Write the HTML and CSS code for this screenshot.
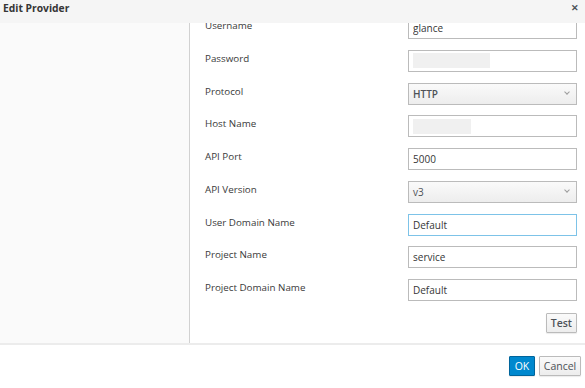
FILE: index.html
```html
<!DOCTYPE html>
<html lang="en">
<head>
    <meta charset="UTF-8">
    <meta name="viewport" content="width=device-width, initial-scale=1.0">
    <title>Edit Provider</title>
    <link rel="stylesheet" href="styles.css">
</head>
<body>
    <div class="modal">
        <div class="modal-header">
            <h4>Edit Provider</h4>
            <span class="close">&#x2715;</span>
        </div>
        <div class="modal-body">
            <div class="sidebar"></div>
            <div class="content">
                <form class="form">
                    <div class="row">
                        <label>Username</label>
                        <input type="text" class="field" value="glance">
                    </div>
                    <div class="row">
                        <label>Password</label>
                        <div class="field"><span class="blur blur-long"></span></div>
                    </div>
                    <div class="row">
                        <label>Protocol</label>
                        <div class="field select"><span>HTTP</span><span class="caret"></span></div>
                    </div>
                    <div class="row">
                        <label>Host Name</label>
                        <div class="field"><span class="blur blur-short"></span></div>
                    </div>
                    <div class="row">
                        <label>API Port</label>
                        <input type="text" class="field" value="5000">
                    </div>
                    <div class="row">
                        <label>API Version</label>
                        <div class="field select light"><span>v3</span><span class="caret"></span></div>
                    </div>
                    <div class="row">
                        <label>User Domain Name</label>
                        <input type="text" class="field focus" value="Default">
                    </div>
                    <div class="row">
                        <label>Project Name</label>
                        <input type="text" class="field" value="service">
                    </div>
                    <div class="row">
                        <label>Project Domain Name</label>
                        <input type="text" class="field" value="Default">
                    </div>
                    <div class="test-row">
                        <button type="button" class="btn btn-test">Test</button>
                    </div>
                </form>
            </div>
        </div>
        <div class="modal-footer">
            <button type="button" class="btn btn-primary">OK</button>
            <button type="button" class="btn btn-cancel">Cancel</button>
        </div>
    </div>
</body>
</html>
```

FILE: styles.css
```css
body {
    margin: 0;
    padding: 0;
    font-family: "Open Sans", "Liberation Sans", sans-serif;
    font-size: 10px;
    color: #363636;
    background-color: #fff;
}

.modal {
    width: 585px;
    height: 388px;
    display: flex;
    flex-direction: column;
    overflow: hidden;
}

.modal-header {
    height: 23px;
    background-color: #f5f5f5;
    display: flex;
    align-items: center;
    justify-content: space-between;
    padding: 0 6px 0 3px;
    position: relative;
    z-index: 1;
}

.modal-header h4 {
    margin: 0;
    font-size: 10.3px;
    font-weight: 700;
    color: #363636;
    margin-top: -7px;
}

.close {
    font-size: 9px;
    font-weight: 700;
    color: #4d5258;
    margin-top: -9px;
}

.modal-body {
    height: 320px;
    display: flex;
}

.sidebar {
    width: 189px;
    background-color: #fafafa;
    border-right: 1px solid #d1d1d1;
}

.content {
    flex: 1;
    overflow: hidden;
}

.form {
    margin-top: -6px;
    padding: 0 8px 0 15px;
    display: flex;
    flex-direction: column;
    gap: 10.75px;
}

.row {
    display: flex;
    align-items: center;
}

.row label {
    flex: 1;
    font-size: 9.8px;
    color: #3a3a3a;
    padding-bottom: 5px;
}

.field {
    box-sizing: border-box;
    width: 169px;
    height: 22px;
    border: 1px solid #bbb;
    background-color: #fff;
    padding: 0 4px;
    font-family: inherit;
    font-size: 10px;
    color: #363636;
    display: flex;
    align-items: center;
    margin: 0;
    outline: none;
}

.field.focus {
    border-color: #7dc3e8;
}

.select {
    background: linear-gradient(#fafafa, #ededed);
    font-weight: 600;
    color: #4d5258;
    justify-content: space-between;
    padding-right: 7px;
}

.select.light {
    font-weight: 400;
}

.caret {
    width: 3px;
    height: 3px;
    border-right: 1px solid #9c9c9c;
    border-bottom: 1px solid #9c9c9c;
    transform: rotate(45deg);
    margin-top: -3px;
}

.blur {
    display: block;
    height: 15px;
    background-color: #f0f0f0;
}

.blur-long {
    width: 77px;
}

.blur-short {
    width: 58px;
}

.test-row {
    display: flex;
    justify-content: flex-end;
    margin-top: 1px;
}

.btn {
    height: 20px;
    padding: 0 5px;
    font-family: inherit;
    font-size: 10.5px;
    color: #4d5258;
    border: 1px solid #bbb;
    border-radius: 1px;
    background: linear-gradient(#fafafa, #ededed);
    box-shadow: 0 1px 1px rgba(3, 3, 3, 0.08);
    cursor: pointer;
}

.btn-test {
    padding: 0 4px;
    font-weight: 600;
}

.modal-footer .btn {
    font-size: 10.5px;
    padding: 0;
}

.modal-footer .btn-primary {
    width: 26px;
    color: #fff;
    background: #0088ce;
    border-color: #00659c;
}

.modal-footer .btn-cancel {
    width: 42px;
}

.modal-footer {
    flex: 1;
    border-top: 2px solid #ececec;
    display: flex;
    justify-content: flex-end;
    align-items: flex-start;
    gap: 4px;
    padding: 11px 4px 0 0;
}
```
